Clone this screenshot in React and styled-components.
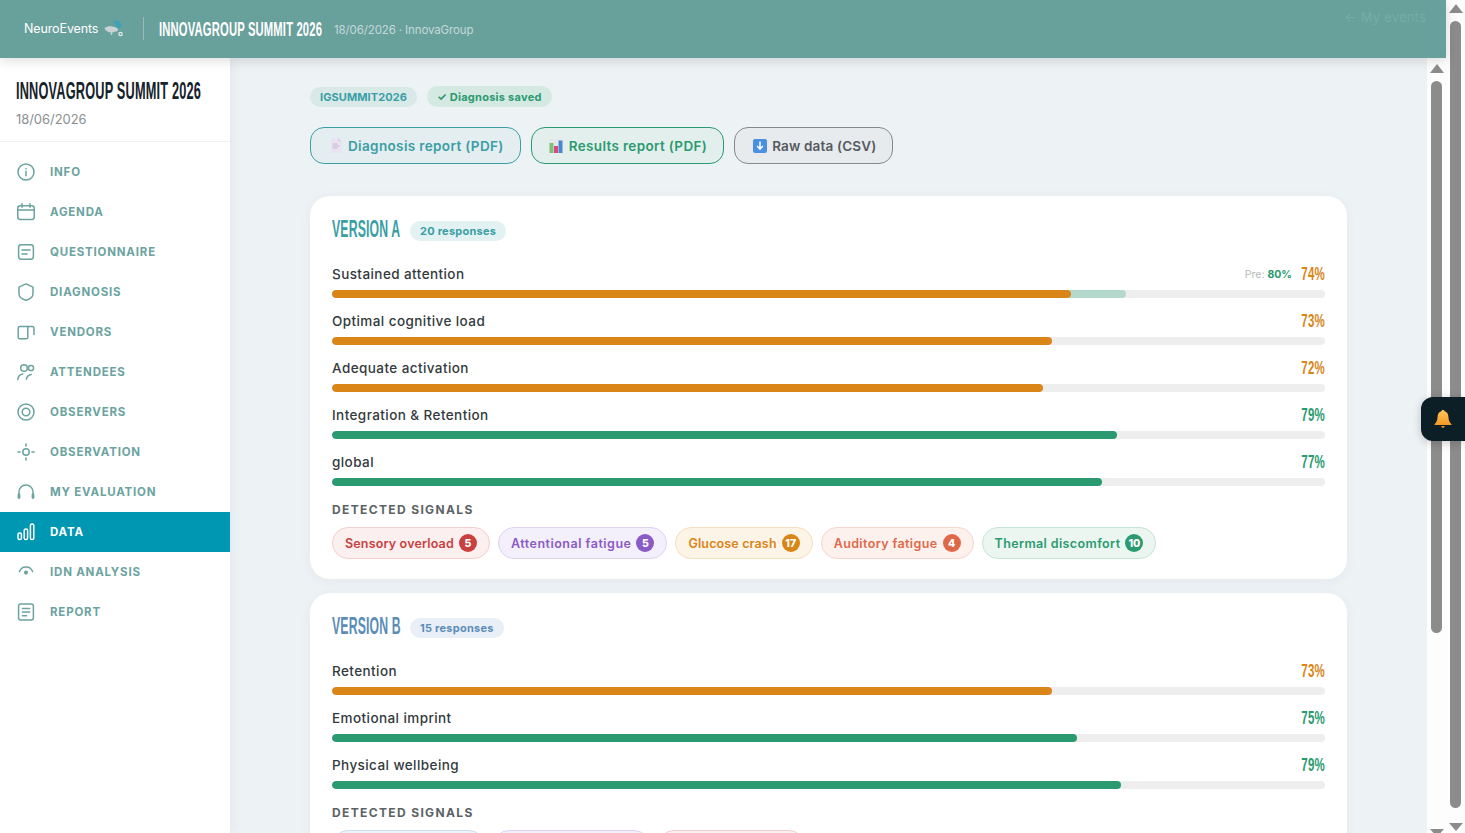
import React from "react";
import styled, { createGlobalStyle } from "styled-components";

const GlobalStyle = createGlobalStyle`
  html, body {
    margin: 0;
    height: 100%;
    overflow: hidden;
    background: #edf2f5;
    font-family: Inter, "Liberation Sans", sans-serif;
  }
  * { box-sizing: border-box; }
  #root { height: 100%; }
`;

const Shell = styled.div`
  display: flex;
  height: 833px;
  overflow: hidden;
`;

const Page = styled.div`
  flex: 1;
  min-width: 0;
  display: flex;
  flex-direction: column;
`;

const Header = styled.header`
  height: 58px;
  flex: none;
  background: #68a09c;
  display: flex;
  align-items: center;
  padding: 0 20px 2px 24px;
  box-shadow: 0 2px 12px rgba(0, 0, 0, 0.15);
  position: relative;
  z-index: 3;
`;

const Logo = styled.div`
  display: flex;
  align-items: center;
  gap: 6px;
  width: 119px;
  color: #fff;
  font-size: 12.5px;
  letter-spacing: -0.12px;
`;

const Divider = styled.div`
  width: 1px;
  height: 23px;
  background: rgba(255, 255, 255, 0.3);
  margin-right: 15px;
`;

const Condensed = styled.span`
  display: inline-flex;
  flex: none;
  white-space: nowrap;
  width: ${(p) => p.$w}px;
  justify-content: ${(p) => (p.$right ? "flex-end" : "flex-start")};
  font-family: "Liberation Sans", sans-serif;
  font-weight: 700;
  font-size: ${(p) => p.$size}px;
  line-height: 1;
  color: ${(p) => p.$color};
  letter-spacing: 0.3px;

  & > span {
    flex: none;
    display: inline-block;
    transform: scaleX(${(p) => p.$scale});
    transform-origin: ${(p) => (p.$right ? "right" : "left")} center;
  }
`;

const HeaderSub = styled.span`
  margin-left: 10px;
  font-size: 11.5px;
  color: rgba(255, 255, 255, 0.62);
  letter-spacing: -0.12px;
  padding-top: 3px;
`;

const BackLink = styled.span`
  margin-left: auto;
  align-self: flex-start;
  margin-top: 9px;
  font-size: 13px;
  letter-spacing: 0.2px;
  color: #76aca9;
`;

const Body = styled.div`
  flex: 1;
  min-height: 0;
  display: flex;
`;

const Sidebar = styled.aside`
  width: 230px;
  flex: none;
  background: #fff;
  box-shadow: 2px 0 10px rgba(0, 50, 60, 0.06);
  position: relative;
  z-index: 2;
`;

const SideHead = styled.div`
  height: 84px;
  padding: 22px 16px 0;
  border-bottom: 1px solid #eef0f1;
`;

const SideDate = styled.div`
  margin-top: 8px;
  font-size: 13px;
  color: #8a8f92;
  letter-spacing: -0.05px;
`;

const Nav = styled.nav`
  padding-top: 10px;
  display: flex;
  flex-direction: column;
`;

const NavItem = styled.div`
  height: 40px;
  display: flex;
  align-items: center;
  gap: 15px;
  padding-left: 17px;
  font-size: 11.5px;
  font-weight: 700;
  letter-spacing: 0.8px;
  color: ${(p) => (p.$active ? "#fff" : "#6ba39f")};
  background: ${(p) => (p.$active ? "#0097b2" : "transparent")};

  svg {
    flex: none;
    width: 18px;
    height: 18px;
    fill: none;
    stroke: currentColor;
    stroke-width: 1.5;
    stroke-linecap: round;
    stroke-linejoin: round;
  }
`;

const Main = styled.main`
  flex: 1;
  min-width: 0;
  overflow: hidden;
  padding: 28px 80px 0;
  background: #edf2f5;
`;

const PillRow = styled.div`
  display: flex;
  align-items: center;
  gap: 10px;
`;

const Pill = styled.span`
  height: ${(p) => (p.$saved ? 21 : 20)}px;
  display: flex;
  align-items: center;
  padding: 0 10px;
  border-radius: 11px;
  font-size: 11px;
  font-weight: 700;
  letter-spacing: ${(p) => (p.$saved ? 0.26 : 0.08)}px;
  color: ${(p) => (p.$saved ? "#2b9a70" : "#3a9ea5")};
  background: ${(p) => (p.$saved ? "#d5e9e3" : "#d8e9e8")};
`;

const ButtonRow = styled.div`
  display: flex;
  gap: 10px;
  margin-top: 20px;
`;

const ExportButton = styled.button`
  height: 37px;
  display: flex;
  align-items: center;
  gap: 5.5px;
  padding: 0 16px 0 17.5px;
  border-radius: 14px;
  border: 1.5px solid ${(p) => p.$color};
  background: ${(p) => p.$bg};
  color: ${(p) => p.$text};
  font-family: inherit;
  font-size: 13.5px;
  font-weight: 600;
  letter-spacing: ${(p) => p.$spacing}px;

  svg { flex: none; }
`;

const Card = styled.section`
  margin-top: ${(p) => p.$gap}px;
  background: #fff;
  border-radius: 20px;
  padding: 21px 22px 20px;
  box-shadow: 0 2px 12px rgba(0, 60, 70, 0.05);
`;

const CardHead = styled.div`
  display: flex;
  align-items: center;
  gap: 10px;
  height: 28px;
  margin-bottom: 19px;

  & > ${Condensed} {
    margin-top: -4px;
  }
`;

const CountBadge = styled.span`
  height: 20px;
  display: flex;
  align-items: center;
  padding: 0 10px;
  border-radius: 10px;
  font-size: 11px;
  font-weight: 700;
  letter-spacing: 0.24px;
  color: ${(p) => p.$color};
  background: ${(p) => p.$bg};
`;

const Metric = styled.div`
  margin-bottom: 13px;
`;

const MetricHead = styled.div`
  display: flex;
  align-items: center;
  height: 20px;
  margin-bottom: 6px;
`;

const MetricName = styled.span`
  font-size: 13.5px;
  font-weight: 500;
  letter-spacing: 0.42px;
  color: #333a3d;
  margin-right: auto;
`;

const PreScore = styled.span`
  font-size: 10.5px;
  color: #b5b9bb;
  margin-right: 9px;

  b {
    color: #2b9a70;
    font-weight: 700;
  }
`;

const Track = styled.div`
  height: 8px;
  border-radius: 4px;
  background: #eeeeee;
  position: relative;
  overflow: hidden;
`;

const Fill = styled.div`
  position: absolute;
  top: 0;
  bottom: 0;
  left: 0;
  border-radius: 4px;
  background: ${(p) => p.$color};
`;

const SignalsTitle = styled.div`
  margin-top: 17px;
  font-size: 12px;
  font-weight: 700;
  letter-spacing: 1.36px;
  color: #5c6366;
  line-height: 14px;
`;

const Chips = styled.div`
  display: flex;
  gap: 8px;
  margin-top: 10px;
`;

const Chip = styled.span`
  height: 32px;
  display: flex;
  align-items: center;
  gap: 5px;
  padding: 0 12px;
  border-radius: 16px;
  font-size: 12.5px;
  font-weight: 600;
  letter-spacing: ${(p) => p.$spacing}px;
  white-space: nowrap;
  color: ${(p) => p.$color};
  background: ${(p) => p.$bg};
  border: 1px solid ${(p) => p.$border};
  width: ${(p) => (p.$w ? `${p.$w}px` : "auto")};
`;

const ChipCount = styled.span`
  width: 18px;
  height: 18px;
  flex: none;
  border-radius: 50%;
  display: flex;
  align-items: center;
  justify-content: center;
  color: #fff;
  font-size: 10.5px;
  font-weight: 800;
  letter-spacing: 0;
  background: ${(p) => p.$color};
`;

const ScrollBar = styled.div`
  width: 19px;
  flex: none;
  background: #fdfdfd;
  display: flex;
  flex-direction: column;
  align-items: center;
  padding-top: ${(p) => p.$top}px;
  position: relative;
  z-index: 1;
`;

const ArrowUp = styled.div`
  width: 0;
  height: 0;
  border-left: 7px solid transparent;
  border-right: 7px solid transparent;
  border-bottom: 9px solid #8c8c8c;
`;

const ArrowDown = styled.div`
  width: 0;
  height: 0;
  flex: none;
  border-left: 7px solid transparent;
  border-right: 7px solid transparent;
  border-top: 8px solid #8c8c8c;
  margin-top: ${(p) => p.$gap}px;
`;

const Thumb = styled.div`
  width: 11px;
  height: ${(p) => p.$h}px;
  flex: none;
  margin-top: 8px;
  border-radius: 6px;
  background: #8c8c8c;
`;

const BellTab = styled.div`
  position: fixed;
  left: 1421px;
  right: 0;
  top: 397px;
  height: 44px;
  background: #0d1f26;
  border-radius: 12px 0 0 12px;
  display: flex;
  align-items: center;
  padding-left: 12px;
  z-index: 5;
  box-shadow: 0 2px 10px rgba(0, 0, 0, 0.2);
`;

const icons = {
  info: (
    <>
      <circle cx="9" cy="9" r="8" />
      <path d="M9 8.200v4.600M9 5.400v.3" />
    </>
  ),
  agenda: (
    <>
      <rect x="0.8" y="2.8" width="16.4" height="13.6" rx="2.4" />
      <path d="M0.8 7h16.400M5 .8v3.400M13 .8v3.400" />
    </>
  ),
  questionnaire: (
    <>
      <rect x="1.6" y="1.8" width="14.8" height="14.4" rx="2.6" />
      <path d="M5 7h8M5 11h5" />
    </>
  ),
  diagnosis: <path d="M9 .9l7 3.200v6.600c0 3.200-3.600 5.600-7 6.500-3.400-.9-7-3.300-7-6.500V4.100z" />,
  vendors: (
    <>
      <path d="M10.800 3.600H2.800a1.600 1.600 0 0 0-1.600 1.600v9a1.600 1.600 0 0 0 1.600 1.600h6.400a1.600 1.600 0 0 0 1.600-1.600V3.600z" />
      <path d="M10.800 3.600h4.600a1.600 1.600 0 0 1 1.600 1.600v6.200" />
    </>
  ),
  attendees: (
    <>
      <circle cx="7" cy="5" r="3.300" />
      <circle cx="14" cy="5" r="2.600" />
      <path d="M.8 16.400c.3-3.200 2.300-5 5-5.400M9.400 16.200c.3-2.400 1.800-4.200 4.800-4.800" />
    </>
  ),
  observers: (
    <>
      <circle cx="9" cy="9" r="8" />
      <circle cx="9" cy="9" r="3.800" />
    </>
  ),
  observation: (
    <>
      <circle cx="9" cy="9" r="3.200" />
      <path d="M9 .9v2.200M9 14.900v2.200M.9 9h2.200M14.900 9h2.200" />
    </>
  ),
  evaluation: (
    <>
      <path d="M2 11.500V9a7 7 0 0 1 14 0v2.500" />
      <path d="M2 12v2.500M16 12v2.500" strokeWidth="2.800" />
    </>
  ),
  data: (
    <>
      <rect x="1" y="10" width="3.400" height="6.600" rx="1.600" />
      <rect x="7.200" y="6" width="3.400" height="10.600" rx="1.600" />
      <rect x="13.400" y="1" width="3.400" height="15.600" rx="1.600" />
    </>
  ),
  idn: (
    <>
      <path d="M2.400 8.600a7 7 0 0 1 13.200 0" />
      <circle cx="9" cy="9.600" r="1.300" fill="currentColor" />
    </>
  ),
  report: (
    <>
      <rect x="1.600" y="1" width="14.800" height="16" rx="2.200" />
      <path d="M5.400 5.400h7.200M5.400 9h7.200M5.400 12.800h4.200" />
    </>
  ),
};

const navItems = [
  ["INFO", "info"],
  ["AGENDA", "agenda"],
  ["QUESTIONNAIRE", "questionnaire"],
  ["DIAGNOSIS", "diagnosis"],
  ["VENDORS", "vendors"],
  ["ATTENDEES", "attendees"],
  ["OBSERVERS", "observers"],
  ["OBSERVATION", "observation"],
  ["MY EVALUATION", "evaluation"],
  ["DATA", "data", true],
  ["IDN ANALYSIS", "idn"],
  ["REPORT", "report"],
];

const ORANGE = "#d98518";
const GREEN = "#2b9a70";

const chipTones = {
  red: ["#c8413f", "#fcefef", "#f5cfcd"],
  purple: ["#8a5ac6", "#f3effb", "#dfd2f3"],
  orange: ["#d98518", "#fdf4e8", "#f6dfbd"],
  coral: ["#e0684a", "#fdf1ee", "#f8d5cc"],
  green: ["#2b9a70", "#ebf6f1", "#c5e5d8"],
  blue: ["#5b8db8", "#eef3fa", "#cfdcee"],
};

const versions = [
  {
    name: "VERSION A",
    color: "#3a9ea5",
    badgeBg: "#e2f2f2",
    responses: "20 responses",
    gap: 32,
    metrics: [
      { name: "Sustained attention", value: 74, width: 74.4, pre: 80, color: ORANGE },
      { name: "Optimal cognitive load", value: 73, width: 72.5, color: ORANGE },
      { name: "Adequate activation", value: 72, width: 71.6, color: ORANGE },
      { name: "Integration & Retention", value: 79, width: 79.05, color: GREEN },
      { name: "global", value: 77, width: 77.5, color: GREEN },
    ],
    signals: [
      { name: "Sensory overload", count: 5, tone: "red", spacing: 0.16 },
      { name: "Attentional fatigue", count: 5, tone: "purple", spacing: 0.5 },
      { name: "Glucose crash", count: 17, tone: "orange", spacing: 0.14 },
      { name: "Auditory fatigue", count: 4, tone: "coral", spacing: 0.38 },
      { name: "Thermal discomfort", count: 10, tone: "green", spacing: 0.38 },
    ],
  },
  {
    name: "VERSION B",
    color: "#5b8db8",
    badgeBg: "#e9eff6",
    responses: "15 responses",
    gap: 14,
    metrics: [
      { name: "Retention", value: 73, width: 72.5, color: ORANGE },
      { name: "Emotional imprint", value: 75, width: 75, color: GREEN },
      { name: "Physical wellbeing", value: 79, width: 79.5, color: GREEN },
    ],
    // only the top edge of these chips fits in the window
    signals: [
      { tone: "blue", w: 153 },
      { tone: "purple", w: 157 },
      { tone: "red", w: 147 },
    ],
  },
];

const Bell = () => (
  <svg width="20" height="20" viewBox="0 0 18 18">
    <defs>
      <linearGradient id="bell" x1="0" y1="0" x2="0" y2="1">
        <stop offset="0" stopColor="#fdc45a" />
        <stop offset="1" stopColor="#f59a23" />
      </linearGradient>
    </defs>
    <path
      d="M9 1c.8 0 1.300.5 1.400 1.100 2.400.6 3.400 2.700 3.500 5.200.1 3 1 4.800 2.600 6.200.4.400.2 1-.4 1H1.900c-.6 0-.8-.6-.4-1 1.600-1.400 2.500-3.200 2.600-6.200.1-2.500 1.100-4.600 3.500-5.200C7.700 1.500 8.200 1 9 1z"
      fill="url(#bell)"
    />
    <path d="M7.400 15.400h3.200c0 1-.7 1.600-1.600 1.600s-1.600-.6-1.600-1.600z" fill="#e58a1c" />
  </svg>
);

const DocIcon = () => (
  <svg width="14" height="15" viewBox="0 0 14 15">
    <path d="M2 0h7l3.500 3.500V15H2z" fill="#ece3f2" />
    <path d="M9 0l3.500 3.500H9z" fill="#d8cbe2" />
    <path d="M3.500 6h5M3.500 8h7M3.500 10h5" stroke="#c4b6cf" strokeWidth="1" />
  </svg>
);

const ChartIcon = () => (
  <svg width="14" height="14" viewBox="0 0 14 14">
    <rect width="14" height="14" fill="#e6e8ea" />
    <rect x="0.5" y="4" width="4" height="10" fill="#7ec27a" />
    <rect x="5" y="7" width="4" height="7" fill="#d8487f" />
    <rect x="9.500" y="1.500" width="4" height="12.500" fill="#4b86cf" />
  </svg>
);

const DownloadIcon = () => (
  <svg width="14" height="14" viewBox="0 0 14 14">
    <rect width="14" height="14" rx="2" fill="#4a90e2" />
    <path d="M7 2.500v7M4.200 7l2.800 3.200L9.800 7" stroke="#fff" strokeWidth="1.500" fill="none" />
  </svg>
);

const LogoMark = () => (
  <svg width="19" height="17" viewBox="0 0 19 17">
    <path d="M.5 8c2-1.500 5-2 8-1.500 3 .4 5 1.200 5.500 3 .3 1.300-1.200 2.300-3 2.100-1 1-3 1.300-4.300.7C4.500 12.500 1 10.500.5 8z" fill="#c9d3d6" />
    <path d="M9 1.500L13 .5l3 1.500 2 3.500-1.500 2.500-3 .2-2-3.500z" fill="#3fa0b8" />
    <circle cx="16.500" cy="14" r="1.700" fill="none" stroke="#e6ecec" strokeWidth="1.200" />
    <path d="M7.500 12v3" stroke="#c9d3d6" strokeWidth="1.400" />
  </svg>
);

const MetricRow = ({ metric }) => (
  <Metric>
    <MetricHead>
      <MetricName>{metric.name}</MetricName>
      {metric.pre && (
        <PreScore>
          Pre: <b>{metric.pre}%</b>
        </PreScore>
      )}
      <Condensed $w={24} $size={18} $scale={0.64} $color={metric.color} $right>
        <span>{metric.value}%</span>
      </Condensed>
    </MetricHead>
    <Track>
      {metric.pre && <Fill $color="#b5d8cd" style={{ width: `${metric.pre}%` }} />}
      <Fill $color={metric.color} style={{ width: `${metric.width}%` }} />
    </Track>
  </Metric>
);

const VersionCard = ({ version }) => (
  <Card $gap={version.gap}>
    <CardHead>
      <Condensed $w={68} $size={24} $scale={0.51} $color={version.color}>
        <span>{version.name}</span>
      </Condensed>
      <CountBadge $color={version.color} $bg={version.badgeBg}>
        {version.responses}
      </CountBadge>
    </CardHead>
    {version.metrics.map((m) => (
      <MetricRow key={m.name} metric={m} />
    ))}
    <SignalsTitle>DETECTED SIGNALS</SignalsTitle>
    <Chips>
      {version.signals.map((s) => {
        const [color, bg, border] = chipTones[s.tone];
        return (
          <Chip key={s.tone} $color={color} $bg={bg} $border={border} $w={s.w} $spacing={s.spacing || 0}>
            {s.name}
            {s.count && <ChipCount $color={color}>{s.count}</ChipCount>}
          </Chip>
        );
      })}
    </Chips>
  </Card>
);

const App = () => (
  <>
    <GlobalStyle />
    <Shell>
      <Page>
        <Header>
          <Logo>
            NeuroEvents
            <LogoMark />
          </Logo>
          <Divider />
          <Condensed $w={165} $size={21} $scale={0.535} $color="#fff">
            <span>INNOVAGROUP SUMMIT 2026</span>
          </Condensed>
          <HeaderSub>18/06/2026 · InnovaGroup</HeaderSub>
          <BackLink>← My events</BackLink>
        </Header>
        <Body>
          <Sidebar>
            <SideHead>
              <Condensed $w={187} $size={23} $scale={0.555} $color="#16222a">
                <span>INNOVAGROUP SUMMIT 2026</span>
              </Condensed>
              <SideDate>18/06/2026</SideDate>
            </SideHead>
            <Nav>
              {navItems.map(([label, icon, active]) => (
                <NavItem key={label} $active={active}>
                  <svg viewBox="0 0 18 18">{icons[icon]}</svg>
                  {label}
                </NavItem>
              ))}
            </Nav>
          </Sidebar>
          <Main>
            <PillRow>
              <Pill>IGSUMMIT2026</Pill>
              <Pill $saved>✓ Diagnosis saved</Pill>
            </PillRow>
            <ButtonRow>
              <ExportButton $color="#3a9ea5" $bg="#e4edf0" $text="#3a9ea5" $spacing={0.36}>
                <DocIcon />
                Diagnosis report (PDF)
              </ExportButton>
              <ExportButton $color="#2b9a70" $bg="#e3efec" $text="#2b9a70" $spacing={0.34}>
                <ChartIcon />
                Results report (PDF)
              </ExportButton>
              <ExportButton $color="#85898c" $bg="#e8ebee" $text="#555a5e" $spacing={0.16}>
                <DownloadIcon />
                Raw data (CSV)
              </ExportButton>
            </ButtonRow>
            {versions.map((v) => (
              <VersionCard key={v.name} version={v} />
            ))}
          </Main>
          <ScrollBar $top={6}>
            <ArrowUp />
            <Thumb $h={552} />
            <ArrowDown $gap={196} />
          </ScrollBar>
        </Body>
      </Page>
      <ScrollBar $top={4}>
        <ArrowUp />
        <Thumb $h={787} />
        <ArrowDown $gap={15} />
      </ScrollBar>
    </Shell>
    <BellTab>
      <Bell />
    </BellTab>
  </>
);

export default App;
